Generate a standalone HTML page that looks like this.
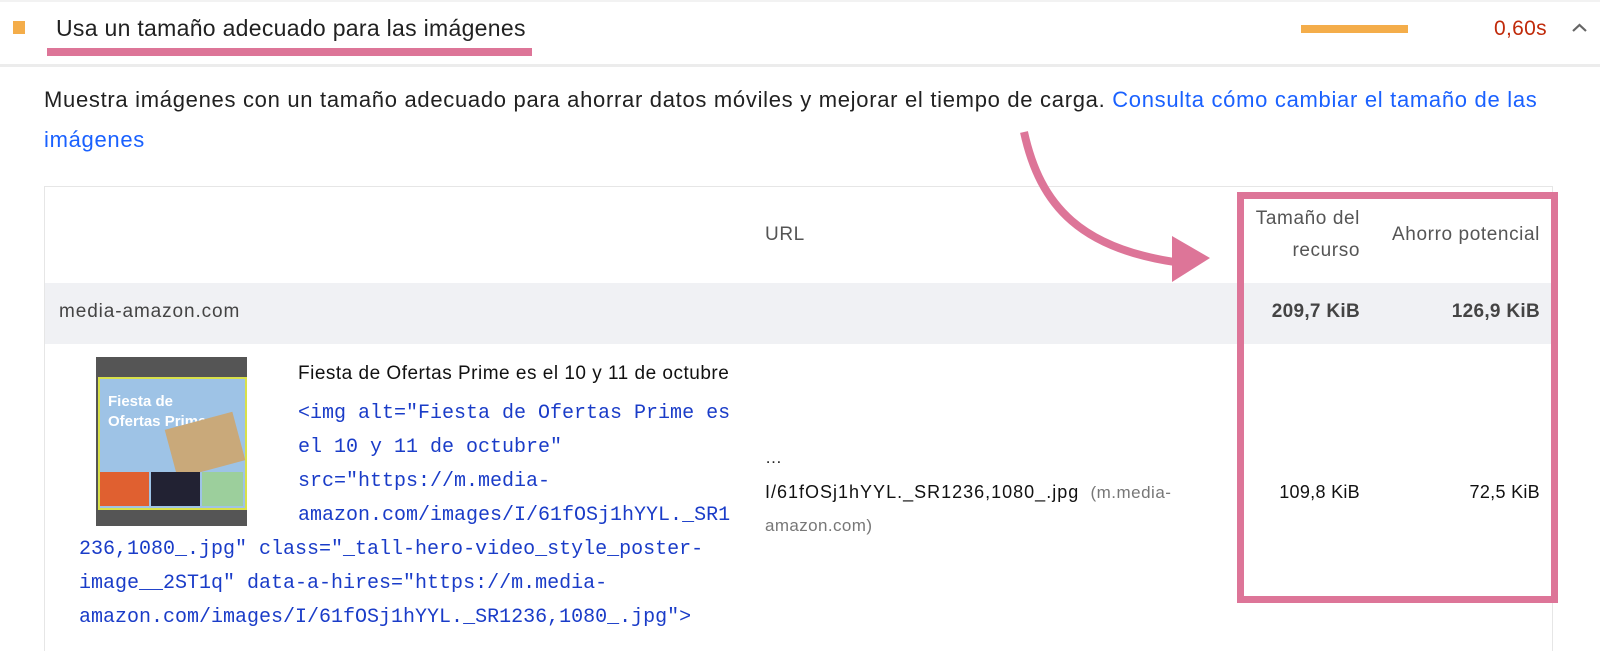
<!DOCTYPE html>
<html><head><meta charset="utf-8"><style>
body{margin:0;width:1600px;height:650px;background:#fff;position:relative;overflow:hidden;font-family:"Liberation Sans",sans-serif;color:#212121;letter-spacing:0.6px}
.a{position:absolute;white-space:nowrap}
.mono{font-family:"Liberation Mono",monospace;color:#1a3cc8;font-size:20px;letter-spacing:0}
.r{text-align:right}
</style></head><body>
<div class="a" style="left:0;top:0;width:1600px;height:2px;background:#f2f2f2"></div>
<div class="a" style="left:13px;top:21px;width:12px;height:13px;background:#f4ad4a"></div>
<div class="a" style="left:56px;top:15px;font-size:23px;letter-spacing:0.3px">Usa un tamaño adecuado para las imágenes</div>
<div class="a" style="left:47px;top:48px;width:485px;height:8px;background:#dd7598"></div>
<div class="a" style="left:1301px;top:25px;width:107px;height:8px;background:#f4ad4a"></div>
<div class="a" style="left:1494px;top:17px;font-size:21px;color:#c02a0a;letter-spacing:0.3px">0,60s</div>
<svg class="a" style="left:1572px;top:22px" width="16" height="12"><path d="M1 9 L7.5 3 L14 9" fill="none" stroke="#666" stroke-width="2.2"/></svg>
<div class="a" style="left:0;top:64px;width:1600px;height:3px;background:#ececec"></div>
<div class="a" style="left:44px;top:80px;font-size:22px;line-height:40px;white-space:normal;width:1520px;letter-spacing:0.7px">Muestra imágenes con un tamaño adecuado para ahorrar datos móviles y mejorar el tiempo de carga. <span style="color:#1a61ff">Consulta cómo cambiar el tamaño de las imágenes</span></div>
<div class="a" style="left:44px;top:186px;width:1507px;height:464px;border:1px solid #e6e6e6;border-bottom:none"></div>
<div class="a" style="left:45px;top:283px;width:1507px;height:61px;background:#f0f1f4"></div>
<div class="a" style="left:765px;top:224px;font-size:19px;color:#555">URL</div>
<div class="a r" style="left:1230px;top:203px;font-size:19px;color:#555;line-height:32px;width:130px">Tamaño del<br>recurso</div>
<div class="a r" style="left:1380px;top:224px;width:160px;font-size:19px;color:#555">Ahorro potencial</div>
<div class="a" style="left:59px;top:301px;font-size:19px;color:#444;letter-spacing:0.9px">media-amazon.com</div>
<div class="a r" style="left:1240px;width:120px;top:301px;font-size:19px;font-weight:bold;color:#444;letter-spacing:0.3px">209,7 KiB</div>
<div class="a r" style="left:1400px;width:140px;top:301px;font-size:19px;font-weight:bold;color:#444;letter-spacing:0.3px">126,9 KiB</div>
<div class="a" style="left:96px;top:357px;width:151px;height:169px;background:#555"></div>
<div class="a" style="left:98px;top:377px;width:145px;height:129px;background:#9ec3e6;border:2px solid #d8e04a"></div>
<div class="a" style="left:108px;top:392px;font-size:15px;font-weight:bold;color:#fff;line-height:20px;letter-spacing:0">Fiesta de<br>Ofertas Prime</div>
<div class="a" style="left:170px;top:420px;width:70px;height:50px;background:#c9a97a;transform:rotate(-15deg)"></div>
<div class="a" style="left:100px;top:472px;width:49px;height:34px;background:#e06030"></div>
<div class="a" style="left:151px;top:472px;width:49px;height:34px;background:#223"></div>
<div class="a" style="left:202px;top:472px;width:41px;height:34px;background:#9ccf9c"></div>
<div class="a" style="left:298px;top:363px;font-size:19px;color:#111;letter-spacing:0.5px">Fiesta de Ofertas Prime es el 10 y 11 de octubre</div>
<div class="a mono" style="left:298px;top:397px;line-height:34px">&lt;img alt="Fiesta de Ofertas Prime es<br>el 10 y 11 de octubre"<br>src="https://m.media-<br>amazon.com/images/I/61fOSj1hYYL._SR1</div>
<div class="a mono" style="left:79px;top:533px;line-height:34px">236,1080_.jpg" class="_tall-hero-video_style_poster-<br>image__2ST1q" data-a-hires="https://m.media-<br>amazon.com/images/I/61fOSj1hYYL._SR1236,1080_.jpg"&gt;</div>
<div class="a" style="left:765px;top:448px;font-size:17px;color:#222">…</div>
<div class="a" style="left:765px;top:482px;font-size:18px;color:#111;letter-spacing:1px">I/61fOSj1hYYL._SR1236,1080_.jpg <span style="color:#777;font-size:17px;letter-spacing:0.5px">&nbsp;(m.media-</span></div>
<div class="a" style="left:765px;top:516px;font-size:17px;color:#777;letter-spacing:0.4px">amazon.com)</div>
<div class="a r" style="left:1240px;width:120px;top:482px;font-size:18px;color:#111;letter-spacing:0.3px">109,8 KiB</div>
<div class="a r" style="left:1400px;width:140px;top:482px;font-size:18px;color:#111;letter-spacing:0.3px">72,5 KiB</div>
<div class="a" style="left:1237px;top:192px;width:307px;height:397px;border:7px solid #dd7598"></div>
<svg class="a" style="left:1000px;top:120px" width="230" height="170"><path d="M24 12 C40 85 80 132 190 144" fill="none" stroke="#dd7598" stroke-width="8"/><path d="M172 116 L210 138 L172 162 Z" fill="#dd7598"/></svg>
</body></html>
